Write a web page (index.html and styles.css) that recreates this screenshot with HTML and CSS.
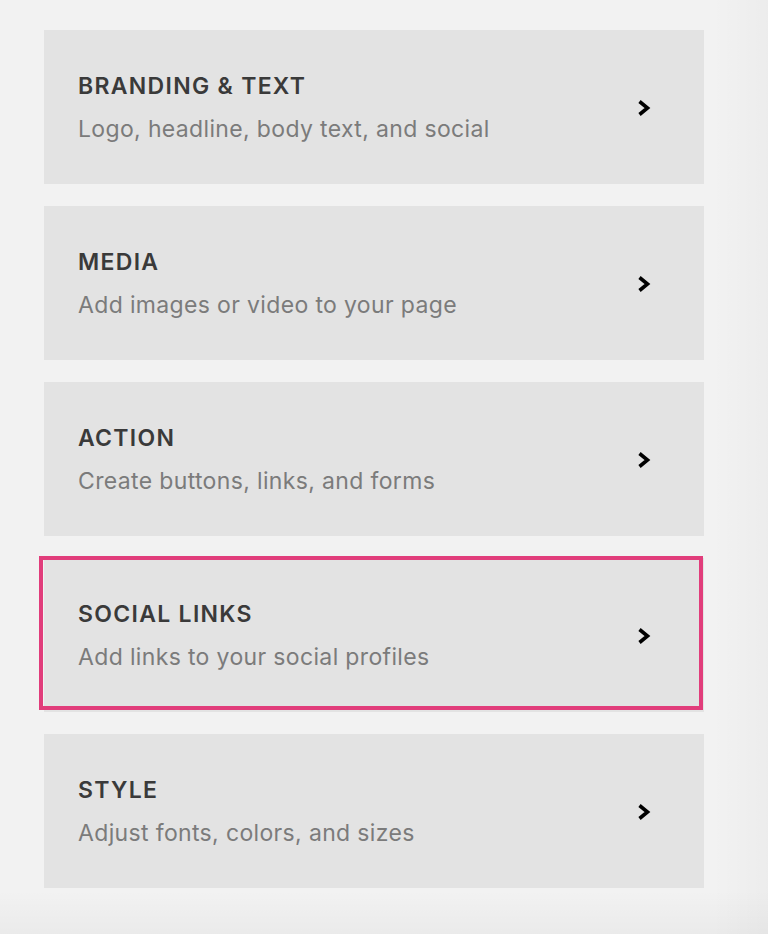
FILE: index.html
```html
<!DOCTYPE html>
<html>
<head>
<meta charset="utf-8">
<link rel="stylesheet" href="styles.css">
</head>
<body>
<div class="page">
  <ul class="menu">
    <li class="card">
      <div class="text">
        <div class="title">BRANDING &amp; TEXT</div>
        <div class="desc">Logo, headline, body text, and social</div>
      </div>
      <svg class="chev" viewBox="0 0 14 18" width="14" height="18"><polyline points="2.5,2.5 10.5,9 2.5,15.5" fill="none" stroke="#000" stroke-width="3.6"/></svg>
    </li>
    <li class="card">
      <div class="text">
        <div class="title">MEDIA</div>
        <div class="desc">Add images or video to your page</div>
      </div>
      <svg class="chev" viewBox="0 0 14 18" width="14" height="18"><polyline points="2.5,2.5 10.5,9 2.5,15.5" fill="none" stroke="#000" stroke-width="3.6"/></svg>
    </li>
    <li class="card">
      <div class="text">
        <div class="title">ACTION</div>
        <div class="desc">Create buttons, links, and forms</div>
      </div>
      <svg class="chev" viewBox="0 0 14 18" width="14" height="18"><polyline points="2.5,2.5 10.5,9 2.5,15.5" fill="none" stroke="#000" stroke-width="3.6"/></svg>
    </li>
    <li class="card card-selected">
      <div class="text">
        <div class="title">SOCIAL LINKS</div>
        <div class="desc">Add links to your social profiles</div>
      </div>
      <svg class="chev" viewBox="0 0 14 18" width="14" height="18"><polyline points="2.5,2.5 10.5,9 2.5,15.5" fill="none" stroke="#000" stroke-width="3.6"/></svg>
    </li>
    <li class="card">
      <div class="text">
        <div class="title">STYLE</div>
        <div class="desc">Adjust fonts, colors, and sizes</div>
      </div>
      <svg class="chev" viewBox="0 0 14 18" width="14" height="18"><polyline points="2.5,2.5 10.5,9 2.5,15.5" fill="none" stroke="#000" stroke-width="3.6"/></svg>
    </li>
  </ul>
</div>
</body>
</html>
```
FILE: styles.css
```css
html, body {
  margin: 0;
  padding: 0;
}
body {
  width: 768px;
  height: 934px;
  overflow: hidden;
  background: #f2f2f2;
  font-family: Inter, "Liberation Sans", Arial, sans-serif;
}
.page {
  height: 934px;
  box-sizing: border-box;
  padding: 30px 0 0 44px;
  background:
    linear-gradient(to right, rgba(0,0,0,0) 712px, rgba(0,0,0,0.025) 768px),
    linear-gradient(to bottom, rgba(0,0,0,0) 890px, rgba(0,0,0,0.03) 934px),
    #f2f2f2;
}
.menu {
  list-style: none;
  margin: 0;
  padding: 0;
  width: 660px;
  display: flex;
  flex-direction: column;
  gap: 22px;
}
.card {
  position: relative;
  height: 154px;
  background: #e3e3e3;
  display: flex;
  align-items: center;
  justify-content: space-between;
  padding: 0 53px 0 34px;
  box-sizing: border-box;
}
.text {
  display: flex;
  flex-direction: column;
  gap: 17px;
}
.title {
  font-size: 23px;
  line-height: 26px;
  font-weight: 600;
  letter-spacing: 1.3px;
  color: #3a3a3a;
}
.desc {
  font-size: 23px;
  line-height: 26px;
  letter-spacing: 0.35px;
  color: #7b7b7b;
}
.chev {
  display: block;
  margin-top: 1px;
}
.card-selected::after {
  content: "";
  position: absolute;
  left: -5px;
  top: -2px;
  width: 664px;
  height: 154px;
  box-sizing: border-box;
  border: 4px solid #e13d7b;
  pointer-events: none;
}
```
